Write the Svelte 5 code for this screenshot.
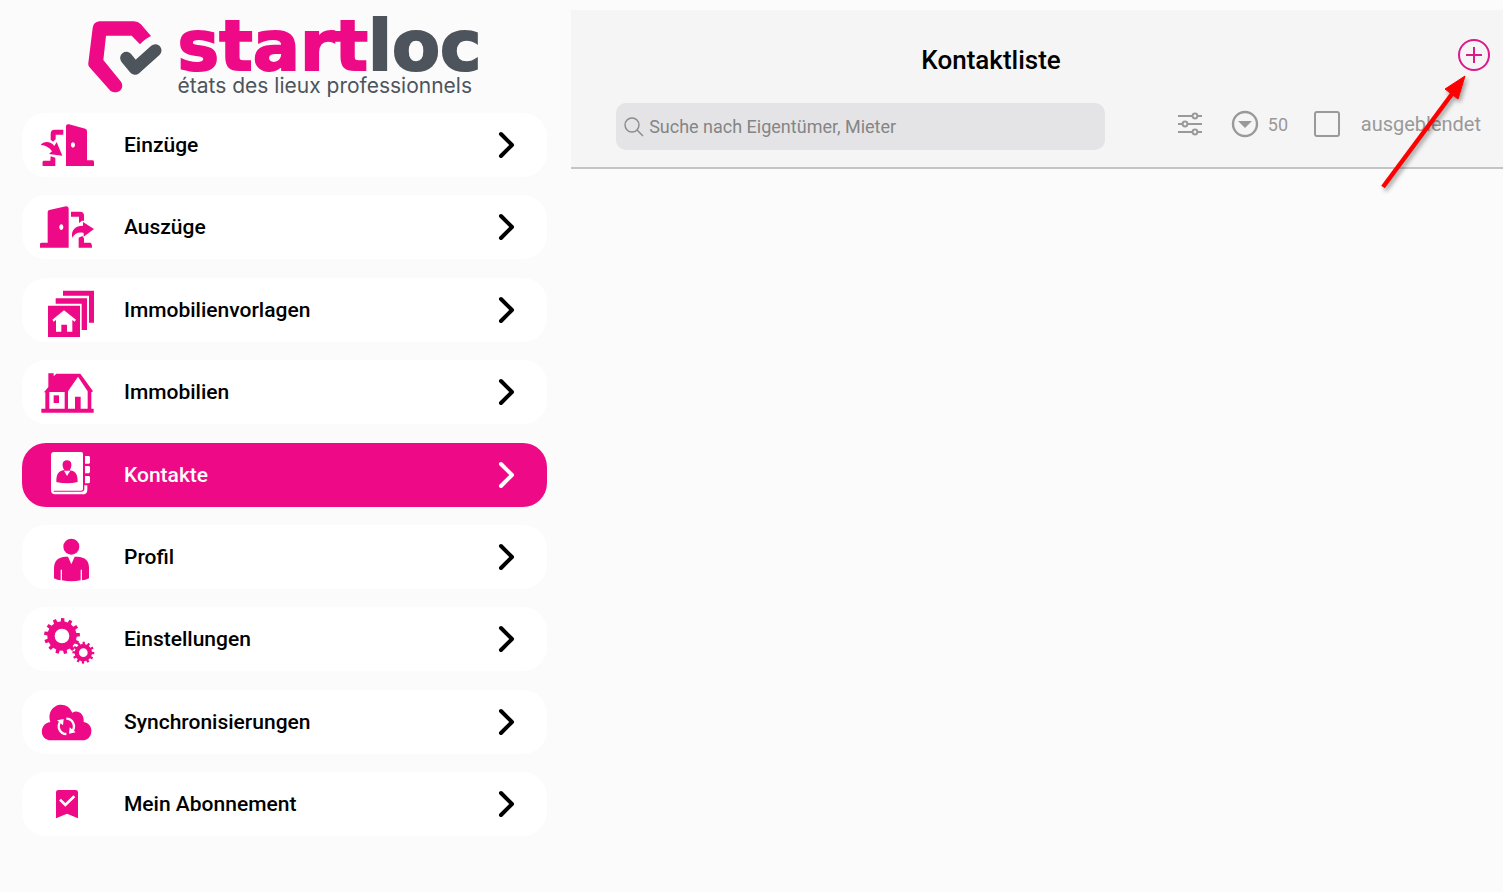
<script lang="ts">
  interface MenuItem {
    id: string
    label: string
    viewBox: string
  }

  const items: MenuItem[] = [
    { id: 'moveIn', label: 'Einzüge', viewBox: '54 9 180 192' },
    { id: 'moveOut', label: 'Auszüge', viewBox: '54 256 180 192' },
    { id: 'templates', label: 'Immobilienvorlagen', viewBox: '54 8 180 192' },
    { id: 'estates', label: 'Immobilien', viewBox: '54 256 180 192' },
    { id: 'contacts', label: 'Kontakte', viewBox: '54 8 180 192' },
    { id: 'profile', label: 'Profil', viewBox: '54 255 180 192' },
    { id: 'settings', label: 'Einstellungen', viewBox: '54 7 180 192' },
    { id: 'sync', label: 'Synchronisierungen', viewBox: '54 254 180 192' },
    { id: 'plan', label: 'Mein Abonnement', viewBox: '54 21 180 192' },
  ]

  let active = $state('contacts')
  let search = $state('')
  let pageSize = $state('50')
  let hidden = $state(false)

  function gear(cx: number, cy: number, outer: number, root: number, hole: number, teeth: number): string {
    const step = (Math.PI * 2) / teeth
    const at = (r: number, a: number) => `${(cx + r * Math.sin(a)).toFixed(1)} ${(cy - r * Math.cos(a)).toFixed(1)}`
    const points: string[] = []
    for (let i = 0; i < teeth; i++) {
      const a = i * step + 0.04
      points.push(at(root, a - step * 0.26), at(outer, a - step * 0.19), at(outer, a + step * 0.19), at(root, a + step * 0.26))
    }
    return `M${points.join('L')}Z M${cx - hole} ${cy}a${hole} ${hole} 0 1 0 ${hole * 2} 0a${hole} ${hole} 0 1 0 ${-hole * 2} 0Z`
  }
</script>

<div class="app">
  <aside class="sidebar">
    <div class="logo">
      <svg class="logo-mark" viewBox="0 0 222 216" aria-hidden="true">
        <path
          d="M34 1H138Q150 1 158 9L189 45Q173 52 156 70L131 44H54L46 117L99 182C112 202 89 224 67 209L4 138Q0 133 1 126L14 21Q16 3 34 1Z"
          fill="#ee0a86"
        />
        <path d="M115 111L141 143L202 88" fill="none" stroke="#4d545c" stroke-width="37" stroke-linecap="round" stroke-linejoin="round" />
      </svg>
      <div class="logo-text">
        <span class="brand">start<span class="brand-end">loc</span></span>
        <span class="tagline">états des lieux professionnels</span>
      </div>
    </div>

    <nav class="menu">
      {#each items as item}
        <button class="menu-item" class:active={active === item.id} onclick={() => (active = item.id)}>
          <svg class="menu-icon" viewBox={item.viewBox} fill="currentColor" fill-rule="evenodd" aria-hidden="true">
            {#if item.id === 'moveIn'}
              <path d="M138 48Q139 41 147 43L196 56Q201 58 201 63V151H218Q222 151 222 156V168H138ZM159 97C151 97 151 113 159 113C167 113 167 97 159 97Z" />
              <path d="M130 59H104Q92 59 92 71V89L99 95L107 88V74H130Z" />
              <path d="M62 105C70 93 92 92 103 108L110 96L127 137L87 132L96 124C89 113 78 106 62 105Z" />
              <path d="M68 168Q66 152 71 152H91L92 139L106 143V168Z" />
            {:else if item.id === 'moveOut'}
              <path d="M146 414H60V403Q60 399 65 399H83V308Q83 302 88 301L138 290Q146 290 146 298ZM124 344C116 344 116 361 124 361C132 361 132 344 124 344Z" />
              <path d="M153 306H180Q192 306 192 318V333H186L177 340V321H153Z" />
              <path d="M157 384C152 362 166 348 189 348V337L222 358L191 381V370C175 366 164 372 157 384Z" />
              <path d="M176 384L187 379L192 386V399H210Q216 399 216 414H176Z" />
            {:else if item.id === 'templates'}
              <path d="M129 46H222V142H207V61H129Z" />
              <path d="M107 69H201V164H185V85H107Z" />
              <path d="M84 91H180V185H84ZM132 105L97 133L101 139L108 134V169H124V148H141V169H157V134L164 139L168 133Z" />
            {:else if item.id === 'estates'}
              <path
                d="M85 296H101V305L109 297H181L219 350L214 353V402H221V414H64V402H76V353H72L85 337ZM88 352V402H134V352ZM174 306L144 350V402H165V366H182V402H203V350Z"
              />
              <path d="M101 362H117V385H101Z" />
            {:else if item.id === 'contacts'}
              <path
                d="M102 35H184Q189 35 189 40V146Q189 151 184 151H104Q100 151 101 154H184Q192 154 193 146V135H202V148Q202 162 188 162H105Q93 162 93 150V44Q93 35 102 35ZM141 60C125 60 125 78 133 89C114 92 109 101 109 125Q141 133 173 125C173 101 167 93 149 90C157 78 157 60 141 60Z"
              />
              <path d="M132 91L141 107L151 91Z" />
              <path d="M195 47H207L210 50V67L207 70H195ZM195 77H207L210 80V95L207 99H195ZM195 107H207L210 110V126L207 129H195Z" />
            {:else if item.id === 'profile'}
              <circle cx="154" cy="320" r="24" />
              <path d="M137 350H144L154 373L164 350H172Q207 352 207 383V415Q196 421 186 421V389H182V421Q154 427 126 421V389H122V421Q112 421 102 415V383Q103 352 137 350Z" />
            {:else if item.id === 'settings'}
              <path d={gear(126, 94, 54, 44, 22, 13)} />
              <path d={gear(190, 144, 33, 26, 13, 12)} />
            {:else if item.id === 'sync'}
              <path
                d="M93 405C58 405 56 355 91 350C80 314 108 297 123 298Q147 298 157 322C172 312 194 325 191 350C224 354 221 405 188 405Z"
              />
              <g class="sync-arrows">
                <path d="M139 386A23 23 0 0 1 121 349" />
                <path d="M139 340A23 23 0 0 1 157 377" />
                <path class="solid" d="M111 345L131 341L129 360ZM167 381L147 385L149 366Z" />
              </g>
            {:else}
              <path d="M115 75H167Q174 75 174 82V160L141 146L108 160V82Q108 75 115 75Z" />
              <path d="M120 104L136 120L163 94" fill="none" stroke="#fff" stroke-width="8" />
            {/if}
          </svg>
          <span class="menu-label">{item.label}</span>
          <svg class="chevron" viewBox="0 0 18 28" aria-hidden="true">
            <path d="M3 3L14 14L3 25" />
          </svg>
        </button>
      {/each}
    </nav>
  </aside>

  <main class="content">
    <header class="header">
      <div class="title-row">
        <h1>Kontaktliste</h1>
        <div class="actions">
          <button class="add" aria-label="Kontakt hinzufügen">
            <svg viewBox="0 0 34 34" aria-hidden="true">
              <circle cx="17" cy="17" r="15" />
              <path d="M17 9V25M9 17H25" />
            </svg>
          </button>
        </div>
      </div>

      <div class="toolbar">
        <label class="search">
          <svg viewBox="0 0 20 20" aria-hidden="true">
            <circle cx="8" cy="8" r="7" />
            <path d="M13 13L19 19" />
          </svg>
          <input type="text" placeholder="Suche nach Eigentümer, Mieter" aria-label="Suche" bind:value={search} />
        </label>

        <div class="filters">
          <button class="filter-btn" aria-label="Filter">
            <svg viewBox="0 0 26 26" aria-hidden="true">
              <path d="M1 5H15M20 5H25M1 13H5M10 13H25M1 21H15M20 21H25" />
              <circle cx="18" cy="5" r="2.4" />
              <circle cx="8" cy="13" r="2.4" />
              <circle cx="18" cy="21" r="2.4" />
            </svg>
          </button>

          <label class="page-size">
            <svg viewBox="0 0 28 28" aria-hidden="true">
              <circle cx="14" cy="14" r="12" />
              <path d="M7 11H21L14 18Z" />
            </svg>
            <select aria-label="Anzahl pro Seite" bind:value={pageSize}>
              <option>50</option>
            </select>
          </label>

          <label class="hidden-toggle">
            <input type="checkbox" bind:checked={hidden} />
            <span>ausgeblendet</span>
          </label>
        </div>
      </div>

      <svg class="pointer" viewBox="0 0 96 124" aria-hidden="true">
        <path d="M10 115L79 22" stroke="#f00" stroke-width="4.5" />
        <path d="M92 4L72 17L85 27Z" fill="#f00" stroke="#f00" />
      </svg>
    </header>
  </main>
</div>

<style>
  :global(body) {
    margin: 0;
    background: #fbfbfb;
  }
  .app {
    display: flex;
    min-height: 100vh;
    font-family: Roboto, 'Liberation Sans', sans-serif;
    color: #000;
  }
  button,
  input,
  select {
    font: inherit;
    color: inherit;
    margin: 0;
    padding: 0;
    border: none;
    background: none;
  }
  button {
    cursor: pointer;
  }
  svg {
    display: block;
    flex: none;
  }
  .sidebar {
    width: 38%;
    box-sizing: border-box;
    padding: 20px 24px 56px 22px;
    display: flex;
    flex-direction: column;
  }
  .logo {
    display: flex;
    justify-content: center;
    gap: 16px;
    height: 93px;
  }
  .logo-mark {
    width: 74px;
    height: 72px;
    margin-top: 1px;
  }
  .logo-text {
    display: flex;
    flex-direction: column;
    color: #4d545c;
    white-space: nowrap;
  }
  .brand {
    font-family: 'DejaVu Sans', sans-serif;
    font-size: 70px;
    font-weight: 700;
    line-height: 52px;
    color: #ee0a86;
    -webkit-text-stroke: 2px currentColor;
  }
  .brand-end {
    color: #4d545c;
  }
  .tagline {
    font-family: Inter, sans-serif;
    font-size: 21px;
    line-height: 28px;
  }
  .menu {
    flex: 1;
    display: flex;
    flex-direction: column;
    justify-content: space-between;
    gap: 16px;
  }
  .menu-item {
    display: flex;
    align-items: center;
    height: 64px;
    padding: 0 31px 0 16px;
    border-radius: 24px;
    background: #fff;
    text-align: left;
  }
  .menu-icon {
    width: 60px;
    height: 64px;
    margin-right: 26px;
    color: #ee0a86;
  }
  .menu-label {
    flex: 1;
    font-size: 21px;
    font-weight: 500;
  }
  .chevron {
    width: 18px;
    height: 28px;
    fill: none;
    stroke: currentColor;
    stroke-width: 4;
    stroke-linecap: round;
    stroke-linejoin: round;
  }
  .menu-item.active {
    background: #ee0a86;
    color: #fff;
  }
  .active .menu-icon {
    color: #fff;
  }
  .sync-arrows {
    fill: none;
    stroke: #fff;
    stroke-width: 7;
  }
  .sync-arrows .solid {
    fill: #fff;
    stroke: none;
  }
  .content {
    flex: 1;
    min-width: 0;
    padding-top: 10px;
  }
  .header {
    position: relative;
    padding: 28px 0 17px;
    background: #f5f5f5;
    border-bottom: 2px solid #c4c4c4;
  }
  .title-row {
    display: flex;
    align-items: flex-start;
    margin-bottom: 21px;
  }
  h1 {
    flex: 1;
    margin: 0;
    font-size: 26px;
    font-weight: 500;
    line-height: 44px;
    text-align: center;
  }
  .actions {
    display: flex;
    justify-content: flex-end;
    width: 80px;
    padding-right: 12px;
  }
  .add svg {
    width: 34px;
    height: 34px;
    fill: none;
    stroke: #dc1a8a;
    stroke-width: 2;
  }
  .toolbar {
    display: flex;
    align-items: flex-start;
    gap: 72px;
    padding: 0 22px 0 45px;
  }
  .search {
    flex: 1;
    min-width: 0;
    display: flex;
    align-items: center;
    gap: 5px;
    height: 47px;
    padding: 0 8px;
    box-sizing: border-box;
    border-radius: 10px;
    background: #e4e4e6;
  }
  .search svg {
    width: 20px;
    height: 20px;
    fill: none;
    stroke: #8a8a8a;
    stroke-width: 1.4;
  }
  .search input {
    flex: 1;
    min-width: 0;
    font-size: 18px;
    outline: none;
  }
  .search input::placeholder {
    color: #858585;
    opacity: 1;
  }
  .filters {
    display: flex;
    align-items: center;
    height: 42px;
    font-size: 20px;
    color: #999;
  }
  .filter-btn {
    margin-right: 28px;
  }
  .filter-btn svg {
    width: 26px;
    height: 26px;
    fill: none;
    stroke: #999;
    stroke-width: 2;
  }
  .page-size {
    display: flex;
    align-items: center;
    gap: 9px;
    margin-right: 25px;
  }
  .page-size svg {
    width: 28px;
    height: 28px;
    fill: none;
    stroke: #999;
    stroke-width: 2.4;
  }
  .page-size path {
    fill: #999;
    stroke: none;
  }
  .page-size select {
    appearance: none;
    font-size: 18px;
  }
  .hidden-toggle {
    display: flex;
    align-items: center;
    gap: 21px;
  }
  .hidden-toggle input {
    appearance: none;
    width: 26px;
    height: 26px;
    box-sizing: border-box;
    border: 2px solid #999;
    border-radius: 3px;
  }
  .hidden-toggle input:checked {
    background: #999;
  }
  .pointer {
    position: absolute;
    top: 62px;
    right: 34px;
    width: 96px;
    height: 124px;
    pointer-events: none;
    filter: drop-shadow(2px 3px 2px rgba(0, 0, 0, 0.35));
  }
</style>
